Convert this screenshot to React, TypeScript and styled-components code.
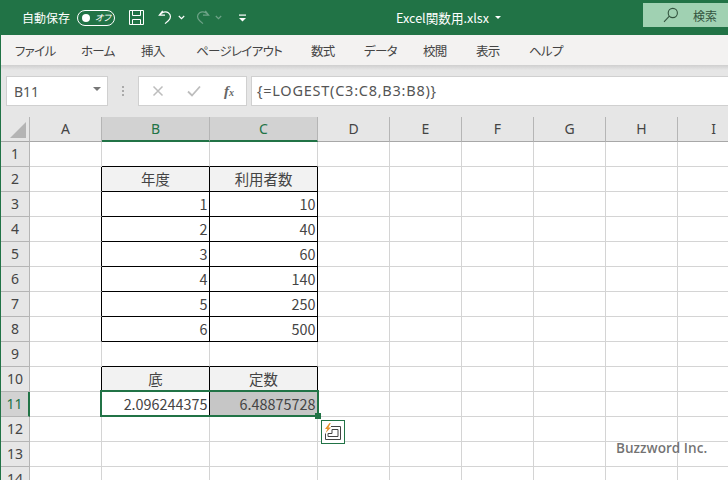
import React from "react"
import styled, { createGlobalStyle } from "styled-components"

const GREEN = "#217346"
const CJK = `"Noto Sans CJK JP", "Noto Sans", sans-serif`

const GlobalStyle = createGlobalStyle`
  html, body { margin: 0; padding: 0; overflow: hidden; }
  body { font-family: ${CJK}; background: #e6e6e6; }
`

const columns = [
  { name: "A", width: 72 },
  { name: "B", width: 108 },
  { name: "C", width: 108 },
  { name: "D", width: 72 },
  { name: "E", width: 72 },
  { name: "F", width: 72 },
  { name: "G", width: 72 },
  { name: "H", width: 72 },
  { name: "I", width: 72 },
]

const tabs = [
  { label: "ファイル", width: 66 },
  { label: "ホーム", width: 60 },
  { label: "挿入", width: 55 },
  { label: "ページ レイアウト", width: 115 },
  { label: "数式", width: 53 },
  { label: "データ", width: 59 },
  { label: "校閲", width: 53 },
  { label: "表示", width: 53 },
  { label: "ヘルプ", width: 60 },
]

type CellData = { text: string; align: "center" | "right"; shade?: boolean }

const head = (text: string): CellData => ({ text, align: "center", shade: true })
const num = (text: string): CellData => ({ text, align: "right" })

const tableCells: Record<number, [CellData, CellData]> = {
  2: [head("年度"), head("利用者数")],
  3: [num("1"), num("10")],
  4: [num("2"), num("40")],
  5: [num("3"), num("60")],
  6: [num("4"), num("140")],
  7: [num("5"), num("250")],
  8: [num("6"), num("500")],
  10: [head("底"), head("定数")],
  11: [num("2.096244375"), num("6.48875728")],
}

const rows = Array.from({ length: 14 }, (_, i) => i + 1)

const isBoxed = (row: number, col: number) => (col === 1 || col === 2) && tableCells[row] !== undefined

const SaveIcon = () => (
  <svg width="17" height="17" viewBox="0 0 17 17" fill="none" stroke="#fff" strokeWidth="1">
    <path d="M1.5 1.5h14v14h-14z" />
    <path d="M4.5 1.5v5h8v-5M4.5 15.5v-5h8v5" />
  </svg>
)

const UndoIcon = ({ dim }: { dim?: boolean }) => (
  <svg width="17" height="17" viewBox="0 0 18 18" fill="none" stroke={dim ? "#6fa388" : "#fff"} strokeWidth="1.3">
    {dim ? (
      <path d="M12 2l3.5 4.5h-6M15 6.5c-1.5-3-6-4.5-9-2.5-3 2-3 6 0 8.5l3.5 3" />
    ) : (
      <path d="M6 2L2.5 6.5h6M3 6.5c1.5-3 6-4.5 9-2.5 3 2 3 6 0 8.5l-3.5 3" />
    )}
  </svg>
)

const Chevron = ({ dim }: { dim?: boolean }) => (
  <svg width="7" height="5" viewBox="0 0 7 5" fill="none" stroke={dim ? "#6fa388" : "#fff"} strokeWidth="1.2">
    <path d="M.8 1l2.7 2.6L6.2 1" />
  </svg>
)

const CustomizeIcon = () => (
  <svg width="9" height="8" viewBox="0 0 9 8" fill="#fff">
    <rect x="1" y="0.5" width="7" height="1.2" />
    <path d="M1 4h7L4.5 7.5z" />
  </svg>
)

const SearchIcon = () => (
  <svg width="16" height="16" viewBox="0 0 16 16" fill="none" stroke="#33543f" strokeWidth="1.1">
    <circle cx="9.8" cy="6" r="4.6" />
    <path d="M6.4 9.2L1 14.8" />
  </svg>
)

const CancelIcon = () => (
  <svg width="12" height="12" viewBox="0 0 12 12" fill="none" stroke="#bdbdbd" strokeWidth="1.5">
    <path d="M1.5 1.5l9 9M10.5 1.5l-9 9" />
  </svg>
)

const CheckIcon = () => (
  <svg width="14" height="12" viewBox="0 0 14 12" fill="none" stroke="#bdbdbd" strokeWidth="1.8">
    <path d="M1 6.5l4 4 8-9" />
  </svg>
)

const QuickAnalysisIcon = () => (
  <svg width="18" height="18" viewBox="0 0 18 18" fill="none">
    <path d="M7 3.5h9.5v13H1.5v-6" stroke="#444" strokeWidth="1" />
    <path d="M8 6.5h6v7H4v-3h4z" stroke="#444" strokeWidth="1" />
    <path d="M5.5 0L1 6h2.4L1.6 10 7 4.4H4.4L6.8 0z" fill="#e8912d" />
  </svg>
)

export default function App() {
  return (
    <>
      <GlobalStyle />
      <Page>
        <TitleBar>
          <AutoSave>自動保存</AutoSave>
          <Toggle>
            <ToggleKnob />
            <ToggleLabel>オフ</ToggleLabel>
          </Toggle>
          <QatSave>
            <SaveIcon />
          </QatSave>
          <QatUndo>
            <UndoIcon />
            <Chevron />
          </QatUndo>
          <QatRedo>
            <UndoIcon dim />
            <Chevron dim />
          </QatRedo>
          <QatCustomize>
            <CustomizeIcon />
          </QatCustomize>
          <FileName>
            Excel関数用.xlsx
            <FileCaret />
          </FileName>
          <SearchBox>
            <SearchIcon />
            <SearchText>検索</SearchText>
          </SearchBox>
        </TitleBar>

        <Ribbon>
          {tabs.map((t) => (
            <Tab key={t.label} $width={t.width}>
              {t.label}
            </Tab>
          ))}
        </Ribbon>
        <RibbonShadow />

        <FormulaBar>
          <NameBox>
            B11
            <NameCaret />
          </NameBox>
          <Grip />
          <ButtonBox>
            <CancelIcon />
            <CheckIcon />
            <FxLabel>
              f<small>x</small>
            </FxLabel>
          </ButtonBox>
          <FormulaInput>{"{=LOGEST(C3:C8,B3:B8)}"}</FormulaInput>
        </FormulaBar>

        <Sheet>
          <Corner>
            <CornerTriangle />
          </Corner>
          {columns.map((c, i) => (
            <ColumnHead key={c.name} $selected={i === 1 || i === 2}>
              {c.name}
            </ColumnHead>
          ))}
          {rows.map((r) => (
            <React.Fragment key={r}>
              <RowHead $selected={r === 11}>{r}</RowHead>
              {columns.map((c, ci) => {
                const data = ci === 1 || ci === 2 ? tableCells[r]?.[(ci - 1) as 0 | 1] : undefined
                return (
                  <Cell
                    key={c.name}
                    $align={data?.align ?? "right"}
                    $shade={data?.shade}
                    $inverted={r === 11 && ci === 2}
                    $blackRight={isBoxed(r, ci) || isBoxed(r, ci + 1)}
                    $blackBottom={isBoxed(r, ci) || isBoxed(r + 1, ci)}
                  >
                    {data?.text}
                  </Cell>
                )
              })}
            </React.Fragment>
          ))}
          <Selection>
            <FillHandle />
          </Selection>
          <QuickAnalysis>
            <QuickAnalysisIcon />
          </QuickAnalysis>
          <Watermark>Buzzword Inc.</Watermark>
        </Sheet>
      </Page>
    </>
  )
}

const Page = styled.div`
  width: 728px;
  height: 480px;
  overflow: hidden;
  display: flex;
  flex-direction: column;
  background: #e6e6e6;
  border-left: 1px solid ${GREEN};
  box-sizing: border-box;
`

const TitleBar = styled.div`
  height: 35px;
  margin-left: -1px;
  flex: none;
  display: flex;
  align-items: center;
  background: ${GREEN};
  color: #fff;
  position: relative;
`

const AutoSave = styled.span`
  margin-left: 22px;
  width: 48px;
  font-size: 12px;
  line-height: 35px;
  white-space: nowrap;
`

const Toggle = styled.div`
  margin-left: 7px;
  width: 38px;
  height: 16px;
  box-sizing: border-box;
  border: 1px solid #fff;
  border-radius: 8px;
  display: flex;
  align-items: center;
  padding-left: 4px;
`

const ToggleKnob = styled.span`
  width: 8px;
  height: 8px;
  border-radius: 50%;
  background: #fff;
`

const ToggleLabel = styled.span`
  margin-left: 5px;
  font-size: 9px;
  font-style: italic;
  font-feature-settings: "palt";
  line-height: 14px;
  white-space: nowrap;
`

const QatSave = styled.span`
  display: flex;
  margin-left: 13px;
`

const QatUndo = styled.span`
  display: flex;
  align-items: center;
  gap: 4px;
  margin-left: 12px;
`

const QatRedo = styled(QatUndo)`
  margin-left: 9px;
`

const QatCustomize = styled.span`
  display: flex;
  margin-left: 16px;
`

const FileName = styled.div`
  margin-left: 149px;
  font-size: 12.6px;
  font-feature-settings: "palt";
  display: flex;
  align-items: center;
  white-space: nowrap;
`

const FileCaret = styled.span`
  margin-left: 6px;
  border-left: 3px solid transparent;
  border-right: 3px solid transparent;
  border-top: 3px solid #fff;
`

const SearchBox = styled.div`
  margin-left: auto;
  width: 85px;
  height: 24px;
  margin-bottom: 5px;
  box-sizing: border-box;
  background: #a0d1b2;
  display: flex;
  align-items: center;
  padding-left: 20px;
  color: #33543f;
`

const SearchText = styled.span`
  margin-left: 14px;
  font-size: 12px;
  white-space: nowrap;
`

const Ribbon = styled.div`
  height: 30px;
  flex: none;
  display: flex;
  align-items: center;
  padding-left: 14px;
  background: #f3f2f1;
`

const Tab = styled.span<{ $width: number }>`
  width: ${({ $width }) => $width}px;
  flex: none;
  font-size: 12.5px;
  letter-spacing: -0.7px;
  font-feature-settings: "palt";
  word-spacing: -2px;
  color: #444;
  white-space: nowrap;
`

const RibbonShadow = styled.div`
  height: 5px;
  flex: none;
  margin-bottom: -5px;
  position: relative;
  background: linear-gradient(#cfcfcf, #e6e6e6);
`

const FormulaBar = styled.div`
  height: 52px;
  flex: none;
  display: flex;
  align-items: flex-start;
  padding: 11px 0 0 5px;
  box-sizing: border-box;
`

const whiteBox = `
  height: 30px;
  box-sizing: border-box;
  background: #fff;
  border: 1px solid #d0d0d0;
`

const NameBox = styled.div`
  ${whiteBox}
  width: 102px;
  flex: none;
  display: flex;
  align-items: center;
  justify-content: space-between;
  padding: 0 6px 0 7px;
  font-family: "Noto Sans", sans-serif;
  font-size: 14px;
  color: #555;
`

const NameCaret = styled.span`
  margin-top: -4px;
  border-left: 4px solid transparent;
  border-right: 4px solid transparent;
  border-top: 4px solid #777;
`

const Grip = styled.span`
  width: 2px;
  height: 10px;
  flex: none;
  margin: 10px 15px 0 14px;
  background: repeating-linear-gradient(#aaa 0 2px, transparent 2px 4px);
`

const ButtonBox = styled.div`
  ${whiteBox}
  width: 109px;
  margin-left: -1px;
  flex: none;
  display: flex;
  align-items: center;
  gap: 23px;
  padding-left: 13px;
`

const FxLabel = styled.span`
  font-family: "Liberation Serif", serif;
  font-style: italic;
  font-weight: 700;
  font-size: 15px;
  color: #666;
  small {
    font-size: 10px;
  }
`

const FormulaInput = styled.div`
  ${whiteBox}
  flex: 1;
  margin-left: 4px;
  border-right: none;
  padding-left: 5px;
  font-family: "Noto Sans", sans-serif;
  font-size: 14.5px;
  letter-spacing: 0.75px;
  line-height: 27px;
  color: #555;
  white-space: nowrap;
`

const Sheet = styled.div`
  flex: 1;
  min-height: 0;
  position: relative;
  margin-left: -1px;
  padding-left: 1px;
  display: grid;
  grid-template-columns: 29px repeat(1, 72px) 108px 108px repeat(6, 72px);
  grid-template-rows: repeat(15, 25px);
  background: #fff;
  overflow: hidden;
  box-shadow: inset 1px 0 0 ${GREEN};
`

const Corner = styled.div`
  background: #e6e6e6;
  border-right: 1px solid #b5b5b5;
  border-bottom: 1px solid #a8a8a8;
  position: relative;
`

const CornerTriangle = styled.span`
  position: absolute;
  right: 3px;
  bottom: 3px;
  border-left: 16px solid transparent;
  border-bottom: 16px solid #b4b4b4;
`

const ColumnHead = styled.div<{ $selected?: boolean }>`
  box-sizing: border-box;
  background: ${({ $selected }) => ($selected ? "#d2d2d2" : "#e6e6e6")};
  color: ${({ $selected }) => ($selected ? GREEN : "#444")};
  border-right: 1px solid #b5b5b5;
  border-bottom: ${({ $selected }) => ($selected ? `2px solid ${GREEN}` : "1px solid #a8a8a8")};
  font-family: "Noto Sans", sans-serif;
  font-size: 14px;
  line-height: 24px;
  text-align: center;
`

const RowHead = styled.div<{ $selected?: boolean }>`
  box-sizing: border-box;
  background: ${({ $selected }) => ($selected ? "#d2d2d2" : "#e6e6e6")};
  color: ${({ $selected }) => ($selected ? GREEN : "#444")};
  border-right: ${({ $selected }) => ($selected ? `2px solid ${GREEN}` : "1px solid #b5b5b5")};
  border-bottom: 1px solid #b5b5b5;
  font-family: "Noto Sans", sans-serif;
  font-size: 14px;
  line-height: 24px;
  text-align: center;
`

const Cell = styled.div<{
  $align: string
  $shade?: boolean
  $inverted?: boolean
  $blackRight?: boolean
  $blackBottom?: boolean
}>`
  box-sizing: border-box;
  padding: 0 1.5px;
  font-size: 14.4px;
  line-height: 24px;
  color: #444;
  white-space: nowrap;
  text-align: ${({ $align }) => $align};
  background: ${({ $shade, $inverted }) => ($inverted ? "#c6c6c6" : $shade ? "#f2f2f2" : "#fff")};
  border-right: 1px solid ${({ $blackRight }) => ($blackRight ? "#000" : "#d4d4d4")};
  border-bottom: 1px solid ${({ $blackBottom }) => ($blackBottom ? "#000" : "#d4d4d4")};
`

const Selection = styled.div`
  position: absolute;
  left: 100px;
  top: 273px;
  width: 219px;
  height: 27px;
  box-sizing: border-box;
  border: 2px solid ${GREEN};
  pointer-events: none;
`

const FillHandle = styled.span`
  position: absolute;
  right: -4px;
  bottom: -4px;
  width: 6px;
  height: 6px;
  background: ${GREEN};
`

const QuickAnalysis = styled.div`
  position: absolute;
  left: 321px;
  top: 303px;
  width: 24px;
  height: 24px;
  box-sizing: border-box;
  border: 1px solid ${GREEN};
  background: #fff;
  display: flex;
  align-items: center;
  justify-content: center;
`

const Watermark = styled.div`
  position: absolute;
  left: 616px;
  top: 321px;
  font-family: "Open Sans", sans-serif;
  font-weight: 600;
  font-size: 13.6px;
  line-height: 20px;
  color: rgba(90, 90, 90, 0.85);
  white-space: nowrap;
`
